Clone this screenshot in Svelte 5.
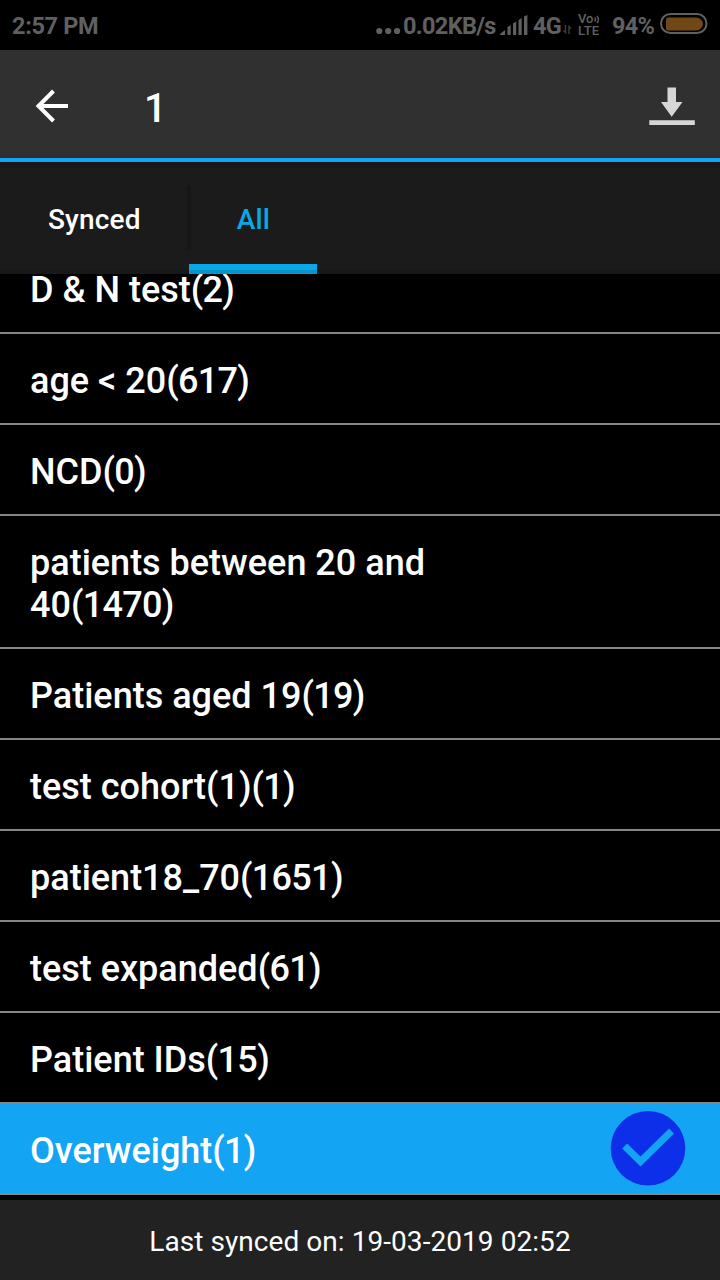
<script lang="ts">
	type Cohort = { name: string; count: number };

	const tabs = ['Synced', 'All'];

	const cohorts: Cohort[] = [
		{ name: 'D & N test', count: 2 },
		{ name: 'age < 20', count: 617 },
		{ name: 'NCD', count: 0 },
		{ name: 'patients between 20 and 40', count: 1470 },
		{ name: 'Patients aged 19', count: 19 },
		{ name: 'test cohort(1)', count: 1 },
		{ name: 'patient18_70', count: 1651 },
		{ name: 'test expanded', count: 61 },
		{ name: 'Patient IDs', count: 15 },
		{ name: 'Overweight', count: 1 }
	];

	let activeTab = 'All';
	let selected = ['Overweight'];

	function toggle(name: string) {
		selected = selected.includes(name)
			? selected.filter((n) => n !== name)
			: [...selected, name];
	}
</script>

<div class="screen">
	<div class="status">
		<span class="time">2:57 PM</span>
		<svg class="dots" width="25" height="8" viewBox="0 0 25 8">
			<circle cx="3.3" cy="4" r="3.1" />
			<circle cx="12.2" cy="4" r="3.1" />
			<circle cx="21.1" cy="4" r="3.1" />
		</svg>
		<span class="speed">0.02KB/s</span>
		<svg class="signal" width="28" height="20" viewBox="0 0 28 20">
			<path d="M0 20v-1l5-4v5zM7.5 20v-8l3.2-2v10zM13 20V8.500l3.200-2V20zM18.500 20V5l3.200-2V20zM24 20V1.500L27.400 0V20z" />
		</svg>
		<span class="net">4G</span>
		<svg class="data" width="9" height="9" viewBox="0 0 9 9">
			<path d="M2.500 0v7.500L0.500 5.500M6 9V1.500l2 2" />
		</svg>
		<div class="volte">
			<div class="vo">
				<span>Vo</span>
				<svg width="6" height="9" viewBox="0 0 6 9">
					<path d="M0.700 2.500q1.600 2 0 4M3 0.800q2.800 3.700 0 7.400" />
				</svg>
			</div>
			<span class="lte">LTE</span>
		</div>
		<span class="percent">94%</span>
		<svg class="battery" width="48" height="22" viewBox="0 0 48 22">
			<rect class="case" x="1" y="1" width="45.500" height="19" rx="9.500" />
			<path class="charge" d="M8 4.500H36a7 6.500 0 0 1 0 13H8q-2 0-2-2v-9q0-2 2-2z" />
		</svg>
	</div>

	<header>
		<button type="button" class="back" title="Back">
			<svg width="34" height="34" viewBox="0 0 34 34">
				<path d="M33 17H4M18.500 2L3.500 17l15 15" />
			</svg>
		</button>
		<h1>{selected.length}</h1>
		<button type="button" class="download" title="Download">
			<svg width="46" height="39" viewBox="0 0 46 39">
				<path d="M18.500 0.500h8.500v14.500h6.500L22.700 29.800 12 15h6.500zM0.300 33.300h45.500v4.700H0.300z" />
			</svg>
		</button>
	</header>

	<nav>
		{#each tabs as tab}
			<button
				type="button"
				class="tab"
				class:active={tab === activeTab}
				on:click={() => (activeTab = tab)}>{tab}</button
			>
		{/each}
	</nav>

	<main>
		<ul>
			{#each cohorts as cohort}
				<li class:selected={selected.includes(cohort.name)}>
					<button type="button" class="row" on:click={() => toggle(cohort.name)}>
						<span class="name">{cohort.name}<span class="count">({cohort.count})</span></span>
						{#if selected.includes(cohort.name)}
							<svg class="check" width="76" height="76" viewBox="0 0 76 76">
								<circle cx="38" cy="38.300" r="37.300" />
								<path d="M14.700 36L30.500 51.500 61.500 21" />
							</svg>
						{/if}
					</button>
				</li>
			{/each}
		</ul>
	</main>

	<footer>Last synced on: 19-03-2019 02:52</footer>
</div>

<style>
	:global(body) {
		background: #000;
	}

	.screen {
		width: 720px;
		height: 1280px;
		display: flex;
		flex-direction: column;
		overflow: hidden;
		background: #000;
		color: #fff;
		font-family: Roboto, sans-serif;
	}

	button {
		appearance: none;
		border: none;
		padding: 0;
		background: none;
		color: inherit;
		font-family: inherit;
		text-align: left;
		cursor: pointer;
	}

	svg {
		display: block;
		flex: none;
	}

	.status {
		box-sizing: border-box;
		height: 50px;
		flex: none;
		display: flex;
		align-items: center;
		padding: 2px 12px 0;
		color: #606060;
		fill: #606060;
		font-size: 23.5px;
		font-weight: 700;
		line-height: 28px;
		letter-spacing: -0.35px;
		white-space: nowrap;
	}

	.time {
		width: 364px;
		flex: none;
	}

	.dots {
		margin-top: 9px;
	}

	.speed {
		width: 99px;
		margin-left: 2px;
		letter-spacing: -0.65px;
	}

	.signal {
		margin: -3px 5px 0 -2px;
	}

	.net {
		width: 29px;
		letter-spacing: -0.8px;
	}

	.data {
		margin: 7px 0 0 1px;
		fill: none;
		stroke: #3a3a3a;
		stroke-width: 1.5;
	}

	.volte {
		width: 24px;
		margin: -2px 0 0 6px;
		font-size: 13px;
		font-weight: 500;
		line-height: 12px;
		letter-spacing: 0;
	}

	.vo {
		display: flex;
		align-items: center;
	}

	.vo svg {
		margin-left: 1px;
		fill: none;
		stroke: #606060;
		stroke-width: 1.4;
	}

	.lte {
		display: block;
		letter-spacing: 0.2px;
	}

	.percent {
		width: 44px;
		margin-left: 10px;
		letter-spacing: -0.7px;
	}

	.battery {
		margin: -4px 0 0 4px;
	}

	.case {
		fill: none;
		stroke: #606060;
		stroke-width: 2;
	}

	.charge {
		fill: #6f4815;
	}

	header {
		height: 108px;
		flex: none;
		display: flex;
		align-items: center;
		background: #303030;
		border-bottom: 4px solid #13a4f4;
	}

	.back {
		margin: 4px 0 0 35px;
	}

	.back path {
		fill: none;
		stroke: #fff;
		stroke-width: 4;
	}

	h1 {
		margin: 9px auto 0 75px;
		font-size: 40px;
		font-weight: 500;
		line-height: 48px;
	}

	.download {
		margin: 4px 25px 0 0;
	}

	.download path {
		fill: #d6d6d6;
	}

	nav {
		height: 112px;
		flex: none;
		display: flex;
		background: linear-gradient(#151515, #1b1b1b 8px, #1b1b1b 108px, #181818 108px);
	}

	.tab {
		position: relative;
		padding: 2px 48px 0;
		font-size: 28px;
		font-weight: 500;
		letter-spacing: 0.17px;
	}

	.tab:not(:last-child)::after {
		content: '';
		position: absolute;
		right: -2px;
		top: 24px;
		width: 4px;
		height: 64px;
		background: #171717;
	}

	.tab.active {
		padding-right: 47px;
		color: #0aa8e6;
		background: linear-gradient(#0aa8e6 6px, #0894cb 6px) bottom / 100% 10px no-repeat;
	}

	main {
		flex: 1;
		overflow: hidden;
	}

	/* list is scrolled to its end, so the first row sits partly under the tabs */
	ul {
		list-style: none;
		margin: -31px 0 0;
		padding: 0;
	}

	li {
		border-bottom: 2px solid #868686;
	}

	.row {
		width: 100%;
		min-height: 89px;
		display: flex;
		align-items: center;
		justify-content: space-between;
		padding: 0 34px 0 30px;
		box-sizing: border-box;
	}

	.name {
		width: 440px;
		padding: 26px 0 21px;
		font-size: 36px;
		font-weight: 500;
		line-height: 42px;
	}

	.count {
		letter-spacing: -0.7px;
	}

	.selected {
		background: #13a4f4;
	}

	.check {
		margin-top: -1px;
	}

	.check circle {
		fill: #0e2fe9;
	}

	.check path {
		fill: none;
		stroke: #13a4f4;
		stroke-width: 7;
	}

	footer {
		height: 80px;
		flex: none;
		background: #222;
		font-size: 28px;
		line-height: 83px;
		letter-spacing: 0.06px;
		text-align: center;
	}
</style>
